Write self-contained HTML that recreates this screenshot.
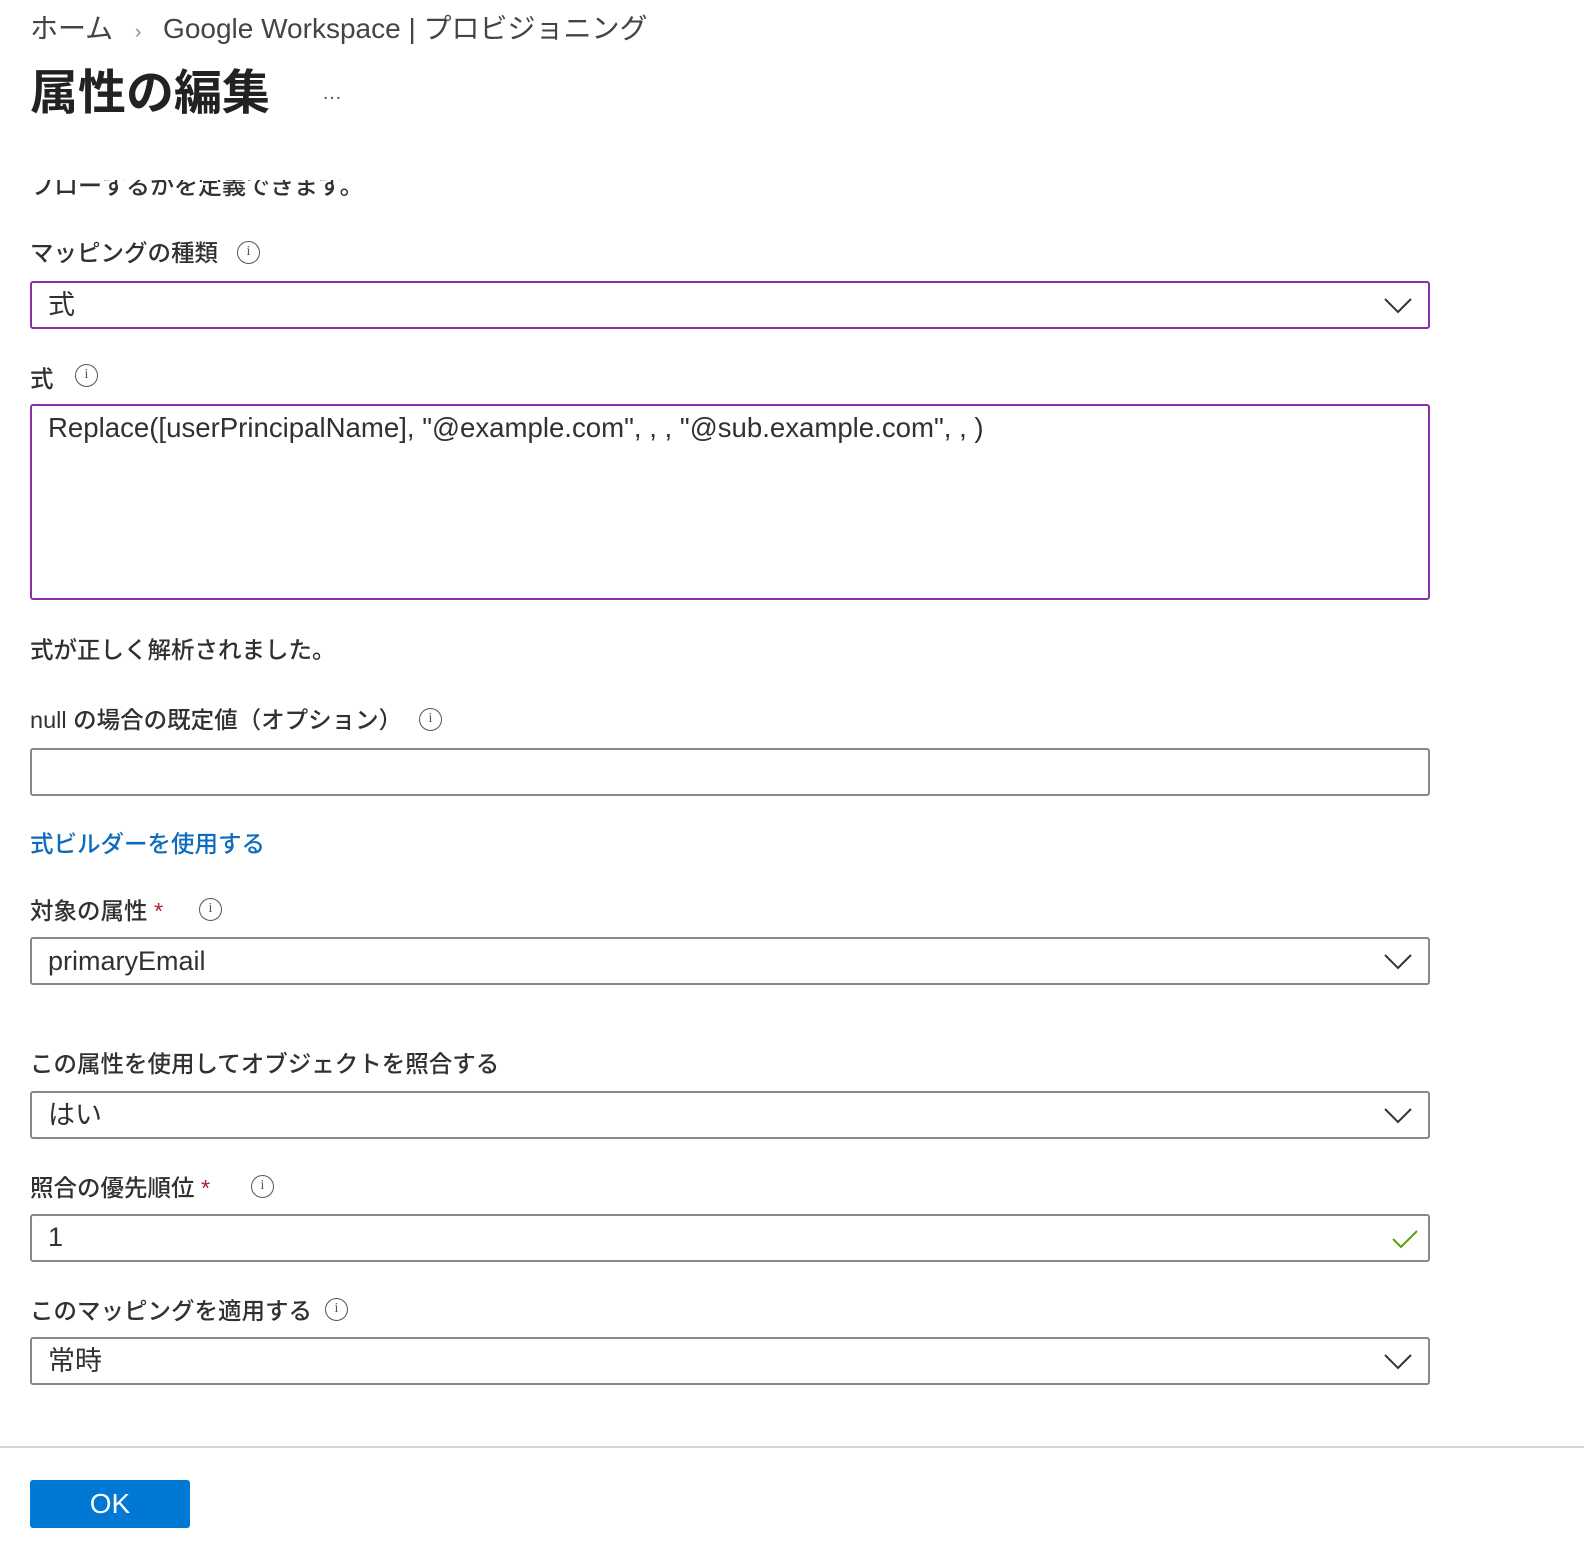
<!DOCTYPE html>
<html><head><meta charset="utf-8"><style>
*{margin:0;padding:0;box-sizing:border-box}
body{width:1584px;height:1554px;background:#fff;position:relative;overflow:hidden;font-family:"Liberation Sans","Noto Sans CJK JP",sans-serif;color:#323130}
.a{position:absolute;white-space:nowrap}
.lbl{font-size:23.5px;font-weight:500;line-height:30px}
.box{position:absolute;left:30px;width:1400px;border:2px solid #8a8886;border-radius:3px;background:#fff}
.p{border-color:#8b2fa8}
.val{position:absolute;left:16px;font-size:27px;line-height:32px}
.chev{position:absolute;right:16px;top:15px}
.info{position:absolute;width:23px;height:23px;border:1.5px solid #555;border-radius:50%;font-size:14px;line-height:20px;text-align:center;color:#555;font-family:"Liberation Serif",serif}
.star{color:#a4262c}
</style></head><body>
<div class="a" style="left:30px;top:12px;font-size:28px;line-height:34px;color:#444">ホーム <span style="font-size:19px;color:#888;margin:0 14px">›</span> Google Workspace | プロビジョニング</div>
<div class="a" style="left:30px;top:64px;font-size:48px;font-weight:bold;line-height:60px;color:#222">属性の編集</div>
<div class="a" style="left:322px;top:82px;font-size:20px;color:#555">…</div>
<div class="a" style="left:30px;top:180px;height:20px;overflow:hidden"><div style="font-size:24px;line-height:30px;margin-top:-8px;font-weight:500">フローするかを定義できます。</div></div>

<div class="a lbl" style="left:30px;top:238px">マッピングの種類</div><div class="info" style="left:237px;top:241px">i</div>
<div class="box p" style="top:281px;height:48px"><div class="val" style="top:6px">式</div><svg class="chev" width="28" height="16"><path d="M1 1 L14 14 L27 1" fill="none" stroke="#333" stroke-width="2"/></svg></div>

<div class="a lbl" style="left:30px;top:364px">式</div><div class="info" style="left:75px;top:364px">i</div>
<div class="box p" style="top:404px;height:196px"><div class="val" style="top:6px;font-size:27.6px">Replace([userPrincipalName], "@example.com", , , "@sub.example.com", , )</div></div>

<div class="a lbl" style="left:30px;top:635px">式が正しく解析されました。</div>

<div class="a lbl" style="left:30px;top:705px">null の場合の既定値（オプション）</div><div class="info" style="left:419px;top:708px">i</div>
<div class="box" style="top:748px;height:48px"></div>

<div class="a lbl" style="left:30px;top:829px;color:#0f6cbd">式ビルダーを使用する</div>

<div class="a lbl" style="left:30px;top:896px">対象の属性 <span class="star">*</span></div><div class="info" style="left:199px;top:898px">i</div>
<div class="box" style="top:937px;height:48px"><div class="val" style="top:6px">primaryEmail</div><svg class="chev" width="28" height="16"><path d="M1 1 L14 14 L27 1" fill="none" stroke="#333" stroke-width="2"/></svg></div>

<div class="a lbl" style="left:30px;top:1049px">この属性を使用してオブジェクトを照合する</div>
<div class="box" style="top:1091px;height:48px"><div class="val" style="top:6px">はい</div><svg class="chev" width="28" height="16"><path d="M1 1 L14 14 L27 1" fill="none" stroke="#333" stroke-width="2"/></svg></div>

<div class="a lbl" style="left:30px;top:1173px">照合の優先順位 <span class="star">*</span></div><div class="info" style="left:251px;top:1175px">i</div>
<div class="box" style="top:1214px;height:48px"><div class="val" style="top:5px">1</div><svg style="position:absolute;right:10px;top:13px" width="26" height="20"><path d="M1 10 L9 18 L25 2" fill="none" stroke="#57a300" stroke-width="2"/></svg></div>

<div class="a lbl" style="left:30px;top:1296px">このマッピングを適用する</div><div class="info" style="left:325px;top:1298px">i</div>
<div class="box" style="top:1337px;height:48px"><div class="val" style="top:6px">常時</div><svg class="chev" width="28" height="16"><path d="M1 1 L14 14 L27 1" fill="none" stroke="#333" stroke-width="2"/></svg></div>

<div class="a" style="left:0;top:1446px;width:1584px;height:2px;background:#d6d6d6"></div>
<div class="a" style="left:30px;top:1480px;width:160px;height:48px;background:#0078d4;border-radius:3px;color:#fff;font-size:28px;font-weight:500;text-align:center;line-height:48px">OK</div>
</body></html>
